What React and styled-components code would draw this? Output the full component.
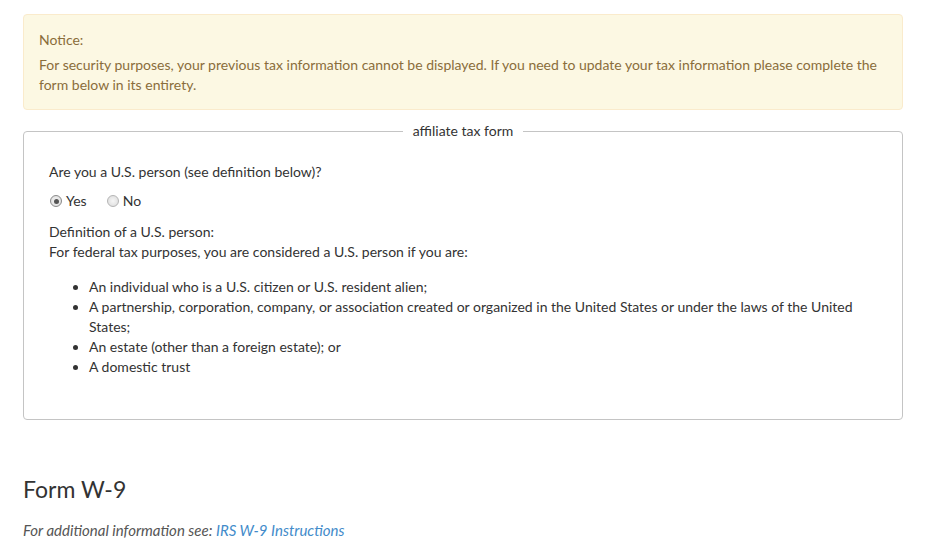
import React from "react";
import styled, { createGlobalStyle } from "styled-components";

const Global = createGlobalStyle`
  html, body { margin: 0; padding: 0; background: #fff; }
  body {
    font-family: Lato, "Open Sans", sans-serif;
    font-weight: 400;
    font-size: 14px;
    line-height: 20px;
    color: #333;
  }
`;

const Page = styled.div`
  padding: 14px 24px 20px 23px;
`;

const Alert = styled.div`
  background: #fcf8e3;
  border: 1px solid #faebcc;
  border-radius: 4px;
  color: #8a6d3b;
  padding: 15px 15px 14px 15px;
  margin-bottom: 11px;
`;

const AlertTitle = styled.div`
  margin-bottom: 5px;
`;

const AlertText = styled.p`
  margin: 0;
`;

const Fieldset = styled.fieldset`
  margin: 0;
  border: 1px solid #c4c4c4;
  border-radius: 4px;
  padding: 21px 25px 22px 25px;
`;

const Legend = styled.legend`
  margin: 0 auto;
  padding: 0 10px;
  line-height: 20px;
`;

const Question = styled.div`
  margin-bottom: 9px;
`;

const RadioRow = styled.div`
  display: flex;
  align-items: center;
  margin-bottom: 11px;
`;

const RadioLabel = styled.label`
  display: inline-flex;
  align-items: center;
  gap: 4px;
  margin-right: 19px;
`;

const RadioDot = styled.span`
  width: 12px;
  height: 12px;
  border-radius: 50%;
  box-sizing: border-box;
  border: 1px solid ${(p) => (p.$checked ? "#8a8a8a" : "#b5b5b5")};
  background: radial-gradient(circle at 50% 50%, #f6f6f6 0%, #dadada 100%);
  display: inline-flex;
  align-items: center;
  justify-content: center;
  margin-left: 1px;
  &::after {
    content: "";
    width: 5px;
    height: 5px;
    border-radius: 50%;
    background: ${(p) => (p.$checked ? "#555" : "transparent")};
  }
`;

const Text = styled.div``;

const List = styled.ul`
  margin: 15px 0 20px 0;
  padding-left: 40px;
  li { margin: 0; }
`;

const Heading = styled.h3`
  font-weight: 400;
  font-size: 23px;
  line-height: 26px;
  color: #333;
  margin: 56px 0 0 0;
`;

const Note = styled.p`
  font-style: italic;
  font-size: 15px;
  color: #555;
  margin: 18px 0 0 0;
`;

const Link = styled.a`
  color: #428bca;
  text-decoration: none;
`;

export default function App() {
  return (
    <>
      <Global />
      <Page>
        <Alert>
          <AlertTitle>Notice:</AlertTitle>
          <AlertText>
            For security purposes, your previous tax information cannot be displayed. If you need to
            update your tax information please complete the form below in its entirety.
          </AlertText>
        </Alert>
        <Fieldset>
          <Legend>affiliate tax form</Legend>
          <Question>Are you a U.S. person (see definition below)?</Question>
          <RadioRow>
            <RadioLabel>
              <RadioDot $checked />
              Yes
            </RadioLabel>
            <RadioLabel>
              <RadioDot />
              No
            </RadioLabel>
          </RadioRow>
          <Text>Definition of a U.S. person:</Text>
          <Text>For federal tax purposes, you are considered a U.S. person if you are:</Text>
          <List>
            <li>An individual who is a U.S. citizen or U.S. resident alien;</li>
            <li>
              A partnership, corporation, company, or association created or organized in the United
              States or under the laws of the United States;
            </li>
            <li>An estate (other than a foreign estate); or</li>
            <li>A domestic trust</li>
          </List>
        </Fieldset>
        <Heading>Form W-9</Heading>
        <Note>
          For additional information see: <Link href="#">IRS W-9 Instructions</Link>
        </Note>
      </Page>
    </>
  );
}
